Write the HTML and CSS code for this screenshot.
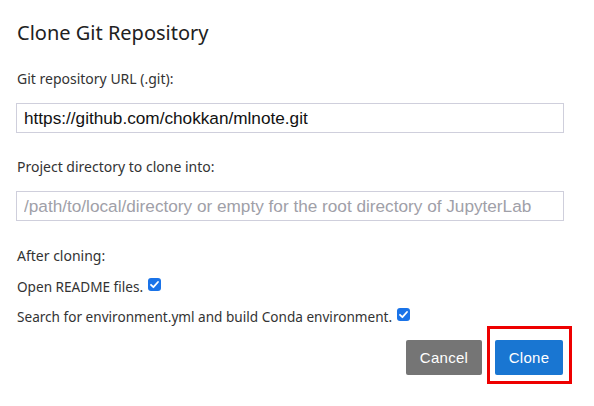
FILE: index.html
```html
<!DOCTYPE html>
<html>
<head>
<meta charset="utf-8">
<link rel="stylesheet" href="styles.css">
</head>
<body>
<div class="dialog">
  <div class="title">Clone Git Repository</div>
  <div class="label">Git repository URL (.git):</div>
  <input class="field" type="text" value="https://github.com/chokkan/mlnote.git">
  <div class="label label-2">Project directory to clone into:</div>
  <input class="field" type="text" placeholder="/path/to/local/directory or empty for the root directory of JupyterLab">
  <div class="label label-3">After cloning:</div>
  <label class="check check-1">Open README files. <span class="box"><svg viewBox="0 0 13 13" width="13" height="13"><path d="M3 6.8 L5.4 9.2 L10 4" fill="none" stroke="#fff" stroke-width="1.8" stroke-linecap="round" stroke-linejoin="round"/></svg></span></label>
  <label class="check check-2">Search for environment.yml and build Conda environment. <span class="box"><svg viewBox="0 0 13 13" width="13" height="13"><path d="M3 6.8 L5.4 9.2 L10 4" fill="none" stroke="#fff" stroke-width="1.8" stroke-linecap="round" stroke-linejoin="round"/></svg></span></label>
  <div class="actions">
    <button class="btn btn-cancel">Cancel</button>
    <span class="highlight"><button class="btn btn-clone">Clone</button></span>
  </div>
</div>
</body>
</html>
```
FILE: styles.css
```css
html, body {
  margin: 0;
  padding: 0;
  background: #fff;
}
.dialog {
  width: 594px;
  height: 406px;
  box-sizing: border-box;
  padding: 19px 31px 0 17px;
  font-family: "Noto Sans", "DejaVu Sans", sans-serif;
  color: #333;
  display: flex;
  flex-direction: column;
}
.title {
  font-size: 20px;
  line-height: 28px;
  color: #212121;
  margin-bottom: 23px;
}
.label {
  font-size: 14px;
  line-height: 18px;
  margin-bottom: 15px;
}
.label-2 { margin-top: 25px; }
.label-3 { margin-top: 26px; margin-bottom: 0; }
.field {
  box-sizing: border-box;
  width: 548px;
  height: 30px;
  margin: 0 0 0 -1px;
  padding: 0 7px;
  border: 1px solid #cfcfdc;
  font-family: "Liberation Sans", Arial, sans-serif;
  font-size: 17.2px;
  color: #111;
  outline: none;
  background: #fff;
}
.field::placeholder {
  color: #a0a0a8;
}
.check {
  font-size: 13.6px;
  line-height: 18px;
  display: flex;
  align-items: center;
  gap: 5px;
}
.check-1 { margin-top: 13px; }
.check-2 { margin-top: 12px; }
.box {
  width: 13px;
  height: 13px;
  border-radius: 3px;
  background: #1a73e8;
  display: inline-flex;
  margin-top: -5px;
}
.actions {
  display: flex;
  justify-content: flex-end;
  align-items: flex-start;
  gap: 5px;
  margin-top: 0;
  margin-right: -9px;
}
.highlight {
  border: 3px solid #ee0000;
  padding: 11px 6px 6px 5px;
}
.btn {
  border: none;
  border-radius: 2px;
  height: 35px;
  font-family: "Liberation Sans", Arial, sans-serif;
  font-size: 15px;
  color: #fff;
  letter-spacing: 0.3px;
  cursor: pointer;
}
.btn-cancel {
  background: #757575;
  width: 76px;
  margin-top: 14px;
}
.btn-clone {
  background: #1976d2;
  width: 68px;
  display: block;
}
```
